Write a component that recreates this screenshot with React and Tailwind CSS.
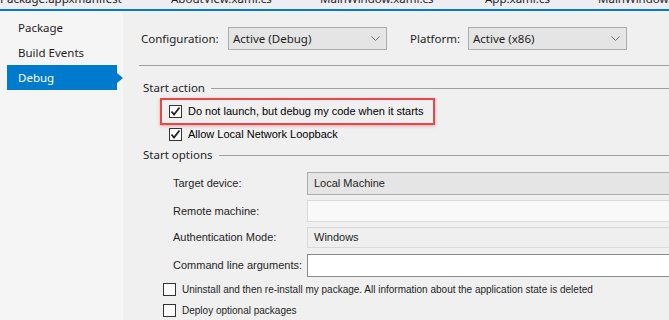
import React from 'react';

const segoe = { fontFamily: '"Noto Sans", "Open Sans", sans-serif' };
const msSans = { fontFamily: '"Liberation Sans", Arial, sans-serif' };

const tabs = [
    { name: 'Package.appxmanifest', x: 0 },
    { name: 'AboutView.xaml.cs', x: 171 },
    { name: 'MainWindow.xaml.cs', x: 320 },
    { name: 'App.xaml.cs', x: 485 },
    { name: 'MainWindow.xaml', x: 598 },
];

const Check = ({ checked }) => (
    <div className="w-[13px] h-[13px] border border-[#333333] bg-white flex items-center justify-center shrink-0">
        {checked && (
            <svg width="11" height="11" viewBox="0 0 11 11">
                <polyline points="1.5,5.5 4,8.5 9.5,1.5" fill="none" stroke="#222" strokeWidth="1.8" />
            </svg>
        )}
    </div>
);

const Chevron = () => (
    <svg width="9" height="6" viewBox="0 0 9 6" className="shrink-0">
        <polyline points="0.5,0.5 4.5,4.5 8.5,0.5" fill="none" stroke="#707070" strokeWidth="1" />
    </svg>
);

const Dropdown = ({ value, width }) => (
    <div
        className="h-[23px] border border-[#acacac] bg-[#e5e5e5] flex items-center justify-between pl-[4px] pr-[6px] text-[11.5px] text-[#1e1e1e]"
        style={{ width }}
    >
        <span className="whitespace-nowrap">{value}</span>
        <Chevron />
    </div>
);

const GroupHeader = ({ label, mt }) => (
    <div className={`flex items-center h-[16px] pl-[20px] ${mt}`}>
        <span className="text-[11.5px] text-[#1e1e1e] leading-none whitespace-nowrap">{label}</span>
        <div className="flex-1 h-px bg-[#a0a0a0] ml-[6px]" />
    </div>
);

const FieldRow = ({ label, h, mt, box, value }) => (
    <div className={`flex items-stretch ${mt}`} style={{ height: h }}>
        <div className="w-[134px] ml-[50px] flex items-center text-[11px] text-[#1e1e1e] whitespace-nowrap" style={msSans}>
            {label}
        </div>
        <div className={`w-[400px] flex items-center pl-[6px] text-[11px] text-[#1e1e1e] ${box}`} style={msSans}>
            {value}
        </div>
    </div>
);

const App = () => {
    return (
        <div className="w-[669px] h-[320px] overflow-hidden bg-[#f0f0f0] flex flex-col" style={segoe}>
            <div className="h-[9px] relative overflow-hidden shrink-0 bg-[#eeeef2]">
                {tabs.map(t => (
                    <span
                        key={t.name}
                        className="absolute top-[-9px] text-[11.5px] text-[#1e1e1e] whitespace-nowrap leading-[16px]"
                        style={{ left: t.x }}
                    >
                        {t.name}
                    </span>
                ))}
            </div>
            <div className="h-[2px] bg-[#007acc] shrink-0" />
            <div className="flex flex-1">
                <div className="w-[123px] bg-[#f5f5f5] pt-[4px] text-[11.5px] text-[#1e1e1e]">
                    <div className="h-[25px] ml-[7px] pl-[11px] flex items-center">Package</div>
                    <div className="h-[25px] ml-[7px] pl-[11px] flex items-center">Build Events</div>
                    <div className="flex items-center">
                        <div className="h-[25px] w-[111px] ml-[7px] pl-[11px] flex items-center bg-[#007acc] text-white">
                            Debug
                        </div>
                        <div className="w-0 h-0 border-y-[5px] border-y-transparent border-l-[6px] border-l-[#007acc]" />
                    </div>
                </div>
                <div className="flex-1 flex flex-col">
                    <div className="flex items-center h-[23px] mt-[16px] text-[11.5px] text-[#1e1e1e]">
                        <span className="ml-[18px] w-[87px] whitespace-nowrap">Configuration:</span>
                        <Dropdown value="Active (Debug)" width={159} />
                        <span className="ml-[23px] w-[58px] whitespace-nowrap">Platform:</span>
                        <Dropdown value="Active (x86)" width={159} />
                    </div>
                    <div className="h-px bg-[#a0a0a0] ml-[16px] mt-[15px]" />
                    <GroupHeader label="Start action" mt="mt-[14px]" />
                    <div className="mt-[2px] ml-[37px] w-[275px] h-[27px] border-2 border-[#e5474a] flex items-center pl-[7px] shadow-[0_1px_3px_rgba(229,71,74,0.45)]">
                        <Check checked />
                        <span className="ml-[6px] text-[11px] text-black whitespace-nowrap" style={msSans}>
                            Do not launch, but debug my code when it starts
                        </span>
                    </div>
                    <div className="mt-[3px] ml-[46px] h-[13px] flex items-center">
                        <Check checked />
                        <span className="ml-[6px] text-[11px] text-black whitespace-nowrap" style={msSans}>
                            Allow Local Network Loopback
                        </span>
                    </div>
                    <GroupHeader label="Start options" mt="mt-[6px]" />
                    <FieldRow
                        label="Target device:"
                        h={23}
                        mt="mt-[9px]"
                        box="border border-[#acacac] bg-[#e5e5e5]"
                        value="Local Machine"
                    />
                    <FieldRow label="Remote machine:" h={22} mt="mt-[5px]" box="border border-[#d9d9d9] bg-[#f9f9f9]" />
                    <FieldRow
                        label="Authentication Mode:"
                        h={21}
                        mt="mt-[5px]"
                        box="border border-[#d9d9d9] bg-[#efefef]"
                        value="Windows"
                    />
                    <FieldRow label="Command line arguments:" h={23} mt="mt-[6px]" box="border border-[#8a8a8a] bg-white" />
                    <div
                        className="mt-[6px] ml-[40px] h-[13px] flex items-center text-[10px] text-[#1e1e1e] whitespace-nowrap"
                        style={msSans}
                    >
                        <Check />
                        <span className="ml-[6px]">
                            Uninstall and then re-install my package. All information about the application state is deleted
                        </span>
                    </div>
                    <div
                        className="mt-[8px] ml-[40px] h-[13px] flex items-center text-[10px] text-[#1e1e1e] whitespace-nowrap"
                        style={msSans}
                    >
                        <Check />
                        <span className="ml-[6px]">Deploy optional packages</span>
                    </div>
                </div>
            </div>
        </div>
    );
};

export default App;
